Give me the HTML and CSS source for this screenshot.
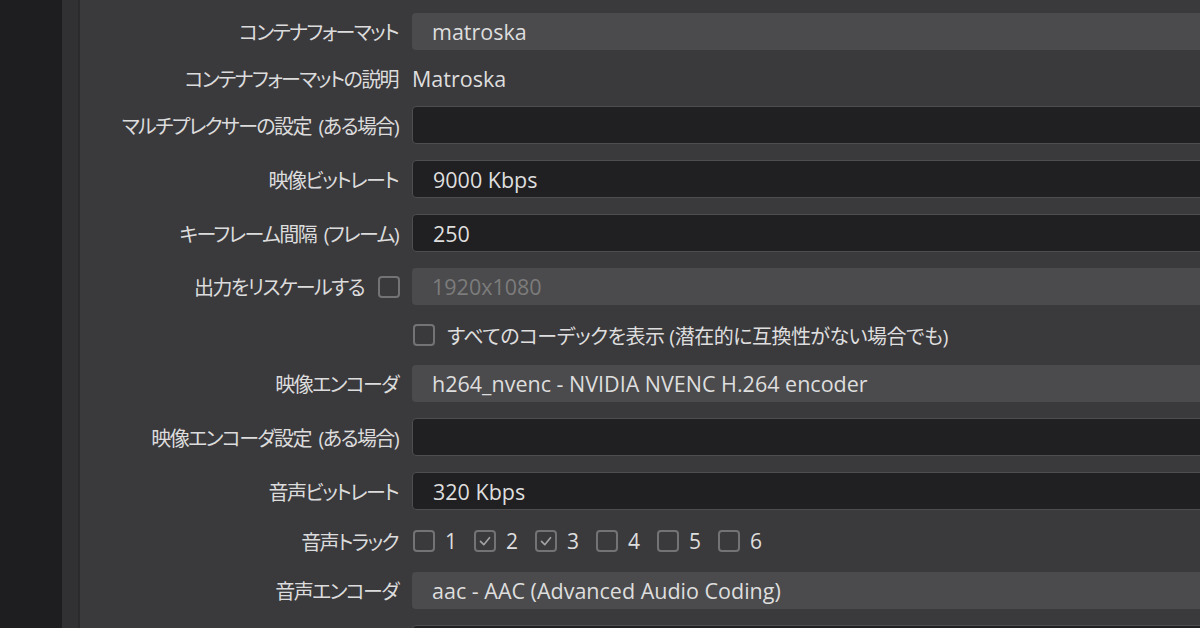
FILE: index.html
```html
<!DOCTYPE html>
<html lang="ja">
<head>
<meta charset="utf-8">
<link rel="stylesheet" href="styles.css">
</head>
<body>
<div class="window">
  <div class="sidebar"></div>
  <div class="strip"></div>
  <div class="main">
    <div class="form">
      <div class="label">コンテナフォーマット</div>
      <div class="combo">matroska</div>

      <div class="label">コンテナフォーマットの説明</div>
      <div class="plain">Matroska</div>

      <div class="label">マルチプレクサーの設定 (ある場合)</div>
      <div class="input"></div>

      <div class="label">映像ビットレート</div>
      <div class="input">9000 Kbps</div>

      <div class="label">キーフレーム間隔 (フレーム)</div>
      <div class="input">250</div>

      <div class="label"><span>出力をリスケールする</span><span class="check"></span></div>
      <div class="combo disabled">1920x1080</div>

      <div class="label"></div>
      <div class="checkrow"><span class="check"></span><span>すべてのコーデックを表示 (潜在的に互換性がない場合でも)</span></div>

      <div class="label">映像エンコーダ</div>
      <div class="combo">h264_nvenc - NVIDIA NVENC H.264 encoder</div>

      <div class="label">映像エンコーダ設定 (ある場合)</div>
      <div class="input"></div>

      <div class="label">音声ビットレート</div>
      <div class="input">320 Kbps</div>

      <div class="label">音声トラック</div>
      <div class="tracks">
        <span class="track"><span class="check"></span><span class="num">1</span></span>
        <span class="track"><span class="check checked"><svg viewBox="0 0 22 22"><path d="M5.5 11.5 L9.5 15.5 L16.5 7" fill="none" stroke="#a3a3a5" stroke-width="2" stroke-linecap="round" stroke-linejoin="round"/></svg></span><span class="num">2</span></span>
        <span class="track"><span class="check checked"><svg viewBox="0 0 22 22"><path d="M5.5 11.5 L9.5 15.5 L16.5 7" fill="none" stroke="#a3a3a5" stroke-width="2" stroke-linecap="round" stroke-linejoin="round"/></svg></span><span class="num">3</span></span>
        <span class="track"><span class="check"></span><span class="num">4</span></span>
        <span class="track"><span class="check"></span><span class="num">5</span></span>
        <span class="track"><span class="check"></span><span class="num">6</span></span>
      </div>

      <div class="label">音声エンコーダ</div>
      <div class="combo">aac - AAC (Advanced Audio Coding)</div>

      <div class="label"></div>
      <div class="input"></div>
    </div>
  </div>
</div>
</body>
</html>
```

FILE: styles.css
```css
html, body {
  margin: 0;
  padding: 0;
  width: 1200px;
  height: 628px;
  overflow: hidden;
  background: #3a393c;
}

body {
  font-family: "Open Sans", "Noto Sans CJK JP", sans-serif;
  color: #dedede;
  font-size: 20px;
}

.window {
  display: flex;
  height: 628px;
}

.sidebar {
  width: 62px;
  flex: none;
  background: #1e1d1f;
}

.strip {
  width: 16px;
  flex: none;
  background: #313033;
  border-right: 2px solid #2b2a2d;
}

.main {
  flex: 1;
  overflow: hidden;
}

.form {
  width: 1240px;
  display: grid;
  grid-template-columns: 320px 1fr;
  grid-template-rows: 37px 24px 38px 38px 38px 37px 28px 37px 38px 38px 30px 37px 38px;
  column-gap: 12px;
  row-gap: 16px;
  padding-top: 13px;
}

.label {
  display: flex;
  align-items: center;
  justify-content: flex-end;
  gap: 13px;
  white-space: nowrap;
  font-feature-settings: "palt";
  letter-spacing: -1.6px;
  word-spacing: 4px;
  padding-right: 2px;
  color: #dcdcdc;
}

.label > span:first-child {
  margin-right: 1px;
}

.label > .check {
  margin-right: -2px;
}

.combo, .input {
  display: flex;
  align-items: center;
  padding-left: 20px;
  border-radius: 4px;
  font-size: 21.5px;
  white-space: nowrap;
  box-sizing: border-box;
}

.combo {
  background: #4b4b4d;
}

.combo.disabled {
  color: #7c7c7c;
}

.input {
  background: #201f21;
  border: 1px solid #4e4d50;
}

.plain {
  display: flex;
  align-items: center;
  font-size: 21.5px;
}

.check {
  width: 18px;
  height: 18px;
  flex: none;
  border: 2px solid #737275;
  border-radius: 4px;
  display: inline-flex;
}

.check svg {
  width: 18px;
  height: 18px;
}

.checkrow {
  display: flex;
  align-items: center;
  gap: 12px;
  padding-left: 1px;
  font-feature-settings: "palt";
  letter-spacing: -0.5px;
  white-space: nowrap;
}

.tracks {
  display: flex;
  align-items: center;
  padding-left: 1px;
  gap: 17px;
}

.track {
  display: flex;
  align-items: center;
  gap: 10px;
}

.num {
  width: 12px;
  font-size: 21px;
}
```
